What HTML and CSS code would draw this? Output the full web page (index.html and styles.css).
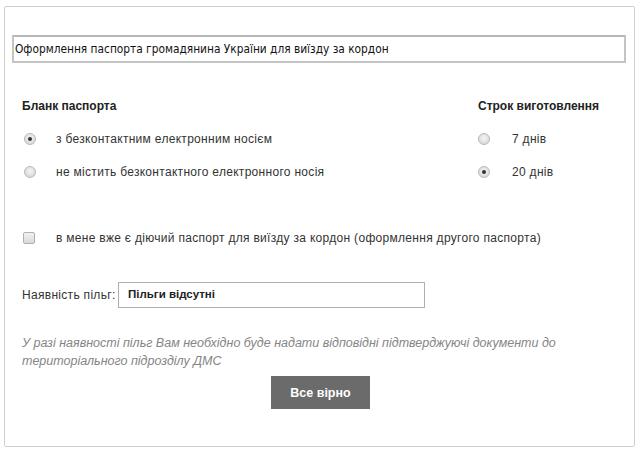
FILE: index.html
```html
<!DOCTYPE html>
<html>
<head>
<meta charset="utf-8">
<link rel="stylesheet" href="styles.css">
</head>
<body>
<div class="panel">
  <div class="title-box">Оформлення паспорта громадянина України для виїзду за кордон</div>
  <div class="options">
    <div class="col col-left">
      <div class="heading">Бланк паспорта</div>
      <label class="row"><span class="radio checked"></span><span>з безконтактним електронним носієм</span></label>
      <label class="row"><span class="radio"></span><span>не містить безконтактного електронного носія</span></label>
    </div>
    <div class="col col-right">
      <div class="heading">Строк виготовлення</div>
      <label class="row"><span class="radio"></span><span>7 днів</span></label>
      <label class="row"><span class="radio checked"></span><span>20 днів</span></label>
    </div>
  </div>
  <label class="row check-row"><span class="checkbox"></span><span>в мене вже є діючий паспорт для виїзду за кордон (оформлення другого паспорта)</span></label>
  <div class="benefits">
    <span class="benefits-label">Наявність пільг:</span>
    <div class="select">Пільги відсутні</div>
  </div>
  <p class="note">У разі наявності пільг Вам необхідно буде надати відповідні підтверджуючі документи до територіального підрозділу ДМС</p>
  <div class="actions"><button class="btn">Все вірно</button></div>
</div>
</body>
</html>
```
FILE: styles.css
```css
* { box-sizing: border-box; }
body {
  margin: 0;
  background: #fff;
  font-family: "Liberation Sans", Arial, sans-serif;
  font-size: 12px;
  color: #222;
}
.panel {
  margin: 6px 0 0 4px;
  width: 631px;
  height: 441px;
  border: 1px solid #cfcfcf;
  border-radius: 2px;
  padding: 28px 0 0 7px;
}
.title-box {
  width: 614px;
  height: 28px;
  border: 2px solid #c4c4c4;
  border-top-color: #b8b8b8;
  padding: 0 1px;
  line-height: 24px;
  font-family: "DejaVu Sans", sans-serif;
  font-size: 11.8px;
  font-stretch: condensed;
  color: #111;
}
.options {
  display: flex;
  margin-top: 34px;
  padding-left: 10px;
}
.col { display: flex; flex-direction: column; }
.col-left { width: 456px; }
.heading {
  font-weight: bold;
  line-height: 18px;
  height: 18px;
  color: #222;
}
.row {
  display: flex;
  align-items: center;
  height: 18px;
  line-height: 18px;
  color: #333;
  letter-spacing: 0.3px;
  white-space: nowrap;
}
.col .row { margin-top: 15px; }
.col-left .row .radio { margin-left: 2px; margin-right: 20px; }
.col-right .row .radio { margin-left: 0; margin-right: 22px; }
.radio {
  width: 12px;
  height: 12px;
  border-radius: 50%;
  border: 1px solid #b8b8b8;
  background: radial-gradient(circle at 50% 40%, #f4f4f4 0%, #dcdcdc 70%, #cfcfcf 100%);
  position: relative;
  flex: none;
}
.radio.checked::after {
  content: "";
  position: absolute;
  left: 3px;
  top: 3px;
  width: 4px;
  height: 4px;
  border-radius: 50%;
  background: #333;
}
.check-row {
  margin-top: 48px;
  padding-left: 10px;
}
.checkbox {
  width: 12px;
  height: 12px;
  border: 1px solid #b0b0b0;
  border-radius: 2px;
  background: linear-gradient(#f2f2f2, #d8d8d8);
  margin-left: 1px;
  margin-right: 21px;
  flex: none;
}
.benefits {
  display: flex;
  align-items: center;
  margin-top: 35px;
  padding-left: 10px;
}
.benefits-label {
  width: 96px;
  white-space: nowrap;
  color: #333;
  letter-spacing: 0.3px;
}
.select {
  width: 307px;
  height: 26px;
  border: 1px solid #b0b0b0;
  padding-left: 9px;
  line-height: 22px;
  font-size: 11.5px;
  font-weight: bold;
  color: #222;
}
.note {
  margin: 26px 0 0 10px;
  width: 580px;
  font-size: 12.5px;
  font-style: italic;
  line-height: 18px;
  color: #858585;
}
.actions {
  display: flex;
  padding-left: 259px;
  margin-top: 6px;
}
.btn {
  width: 99px;
  height: 33px;
  border: none;
  background: #6b6b6b;
  color: #fff;
  font-family: "Liberation Sans", Arial, sans-serif;
  font-size: 12.5px;
  font-weight: bold;
  padding: 0;
}
```
